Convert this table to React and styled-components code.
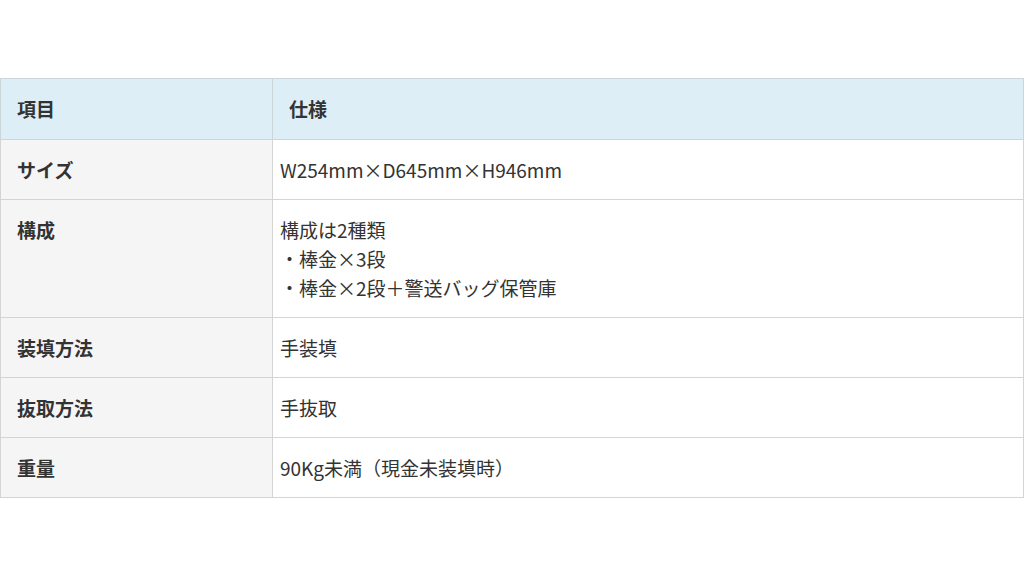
import React from 'react'
import styled, { createGlobalStyle } from 'styled-components'

const GlobalStyle = createGlobalStyle`
  html, body {
    margin: 0;
    padding: 0;
    background: #fff;
  }
  body {
    font-family: "Noto Sans CJK JP", "Noto Sans", sans-serif;
    color: #333;
  }
`

const Page = styled.div`
  padding-top: 78px;
`

const SpecTable = styled.table`
  width: 1024px;
  table-layout: fixed;
  border-collapse: collapse;
  font-size: 19px;
  line-height: 29px;
  border: 1px solid #cfcfcf;
`

const LabelCol = styled.col`
  width: 272px;
`

const HeadCell = styled.th`
  background: #ddeef6;
  font-weight: 700;
  text-align: left;
  padding: 15px 16px 16px;
  border: 1px solid #cbd6da;
`

const LabelCell = styled.th`
  background: #f5f5f5;
  font-weight: 700;
  text-align: left;
  vertical-align: top;
  padding: 15px 16px;
  border: 1px solid #d4d4d4;
`

const ValueCell = styled.td`
  background: #fff;
  vertical-align: top;
  padding: 15px 7px;
  border: 1px solid #d4d4d4;
`

const Line = styled.div``

const rows = [
  { label: 'サイズ', value: ['W254mm×D645mm×H946mm'] },
  { label: '構成', value: ['構成は2種類', '・棒金×3段', '・棒金×2段＋警送バッグ保管庫'] },
  { label: '装填方法', value: ['手装填'] },
  { label: '抜取方法', value: ['手抜取'] },
  { label: '重量', value: ['90Kg未満（現金未装填時）'] },
]

export default function App() {
  return (
    <>
      <GlobalStyle />
      <Page>
        <SpecTable>
          <colgroup>
            <LabelCol />
            <col />
          </colgroup>
          <thead>
            <tr>
              <HeadCell>項目</HeadCell>
              <HeadCell>仕様</HeadCell>
            </tr>
          </thead>
          <tbody>
            {rows.map(row => (
              <tr key={row.label}>
                <LabelCell>{row.label}</LabelCell>
                <ValueCell>
                  {row.value.map(line => <Line key={line}>{line}</Line>)}
                </ValueCell>
              </tr>
            ))}
          </tbody>
        </SpecTable>
      </Page>
    </>
  )
}
